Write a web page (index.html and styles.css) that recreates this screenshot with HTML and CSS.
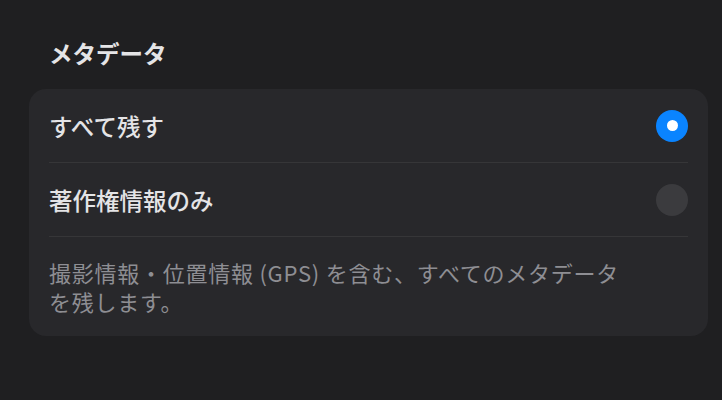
FILE: index.html
```html
<!DOCTYPE html>
<html lang="ja">
<head>
<meta charset="utf-8">
<link rel="stylesheet" href="styles.css">
</head>
<body>
<main class="page">
  <h2 class="section-title">メタデータ</h2>
  <section class="card">
    <div class="row">
      <span class="label">すべて残す</span>
      <span class="radio radio-on"></span>
    </div>
    <div class="row">
      <span class="label">著作権情報のみ</span>
      <span class="radio"></span>
    </div>
    <p class="note">撮影情報・位置情報 (GPS) を含む、すべてのメタデータを残します。</p>
  </section>
</main>
</body>
</html>
```
FILE: styles.css
```css
html, body {
  margin: 0;
  padding: 0;
  background: #1f1f21;
}
body {
  font-family: "Noto Sans CJK JP", "Noto Sans", sans-serif;
  color: #e6e6e8;
}
.page {
  padding: 38px 14px 0 29px;
  width: 679px;
}
.section-title {
  margin: 0 0 21px 20px;
  font-size: 23.5px;
  line-height: 30px;
  font-weight: 600;
  color: #e4e4e6;
}
.card {
  background: #28282b;
  border-radius: 17px;
  padding: 0 20px;
}
.row {
  height: 73px;
  display: flex;
  align-items: center;
  justify-content: space-between;
  border-bottom: 1px solid #363638;
}
.label {
  font-size: 23.5px;
  font-weight: 500;
  color: #e4e4e6;
}
.radio {
  width: 32px;
  height: 32px;
  border-radius: 50%;
  background: #3b3b3e;
  display: flex;
  align-items: center;
  justify-content: center;
}
.radio-on {
  background: #0a84ff;
}
.radio-on::after {
  content: "";
  width: 11px;
  height: 11px;
  border-radius: 50%;
  background: #ffffff;
}
.note {
  margin: 0;
  padding: 21px 0 20px;
  max-width: 582px;
  font-size: 22px;
  line-height: 29px;
  letter-spacing: 0.75px;
  color: #8e8e93;
}
```
